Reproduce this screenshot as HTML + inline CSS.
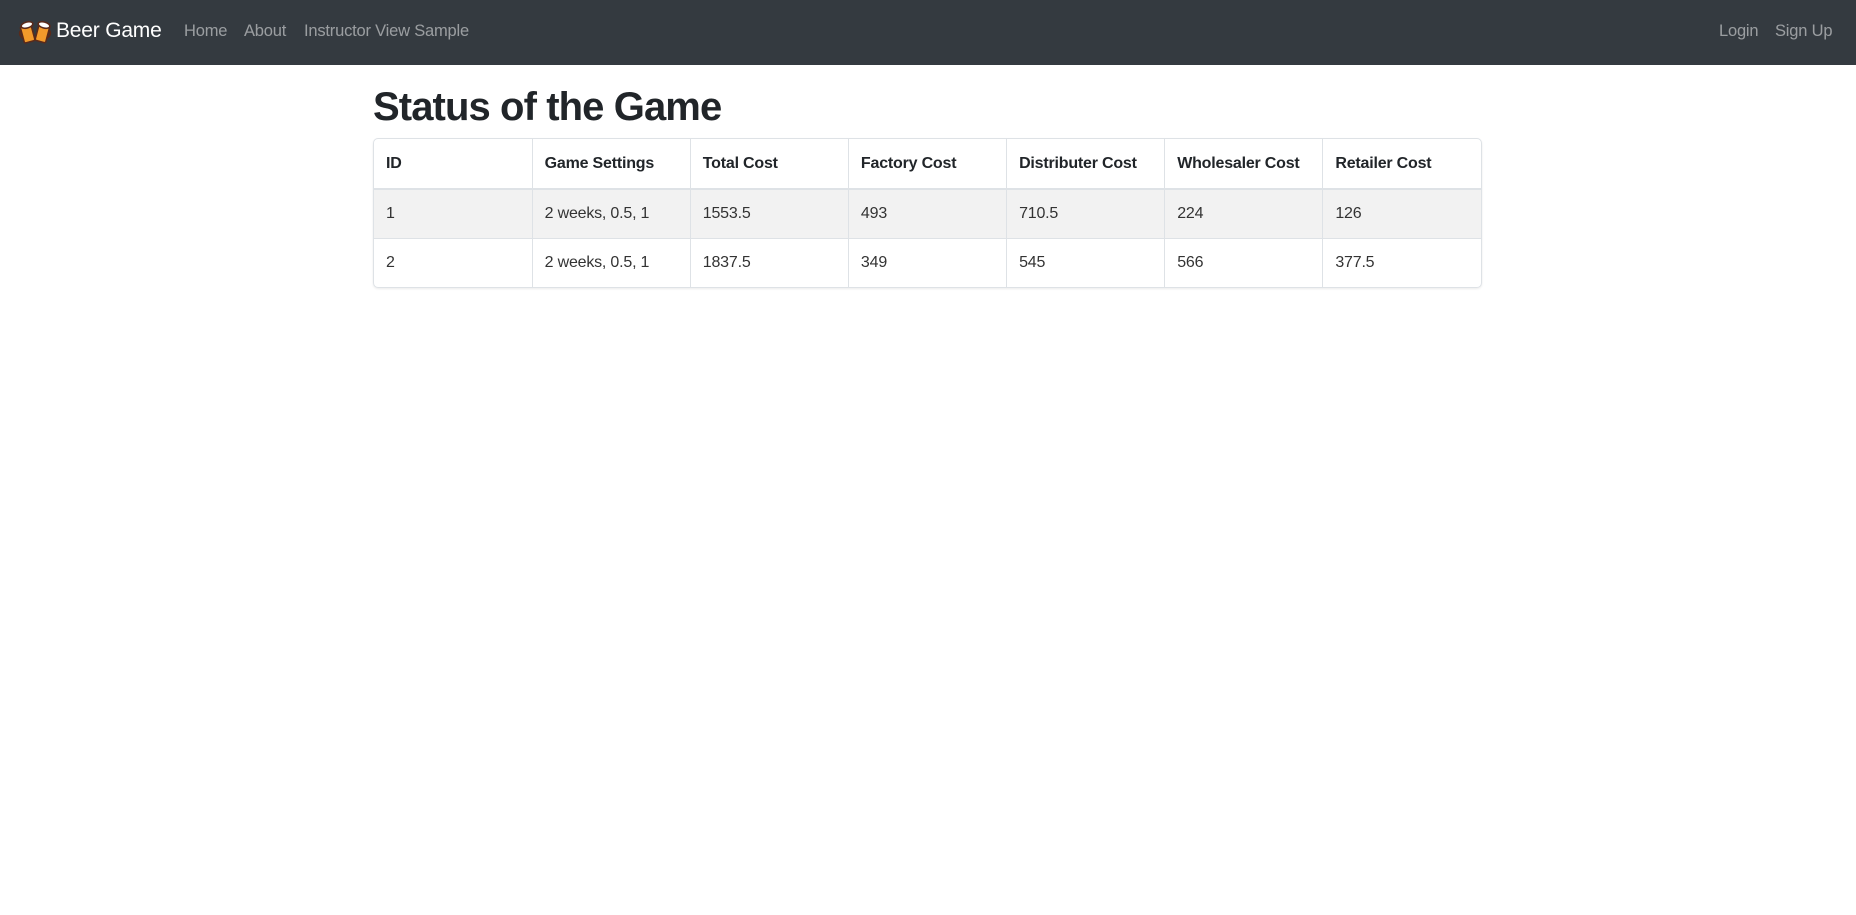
<!DOCTYPE html>
<html><head><meta charset="utf-8"><style>
*{box-sizing:border-box;margin:0;padding:0}
body{width:1856px;height:915px;background:#fff;font-family:"Liberation Sans",sans-serif;color:#212529;overflow:hidden;letter-spacing:-0.2px}
nav{height:65px;background:#343a40;position:relative}
.brand{position:absolute;left:18px;top:16px;display:flex;align-items:center;color:#fff;font-size:21px}
.brand svg{margin-right:2px}
.links a{position:absolute;top:22px;color:rgba(255,255,255,.5);font-size:16.5px;text-decoration:none}
h1{position:absolute;left:373px;top:85px;font-size:40px;font-weight:bold;letter-spacing:-0.9px}
.tbl{position:absolute;left:373px;top:138px;width:1109px;border:1px solid #dee2e6;border-radius:5px;overflow:hidden;box-shadow:0 1px 2px rgba(0,0,0,.08)}
table{border-collapse:collapse;width:100%;table-layout:fixed;font-size:16px}
td,th{padding:0 12px;text-align:left;border-left:1px solid #dee2e6;height:49px}
td:first-child,th:first-child{border-left:none}
th{font-weight:bold;border-bottom:2px solid #dee2e6;height:50px}
tr.s td{background:#f2f2f2;border-bottom:1px solid #dee2e6}
td{color:#333}
</style></head><body>
<nav>
<div class="brand"><svg width="36" height="30" viewBox="0 0 36 30">
<g stroke="#5a2a1a" stroke-width="1.6">
<path d="M2 14 h-0 M3 13 q-3 4 1 8" fill="none" transform="rotate(-15 10 17)"/>
<rect x="4" y="9" width="11" height="17" rx="1.5" fill="#f39a2b" transform="rotate(-15 10 17)"/>
<rect x="19" y="9" width="11" height="17" rx="1.5" fill="#f39a2b" transform="rotate(15 25 17)"/>
<path d="M31 13 q3 4 -1 8" fill="none" transform="rotate(15 25 17)"/>
<ellipse cx="9" cy="9" rx="6" ry="3" fill="#fff" transform="rotate(-15 9 9)"/>
<ellipse cx="26" cy="9" rx="6" ry="3" fill="#fff" transform="rotate(15 26 9)"/>
</g></svg>Beer Game</div>
<div class="links">
<a style="left:184px">Home</a><a style="left:244px">About</a><a style="left:304px">Instructor View Sample</a>
<a style="left:1719px">Login</a><a style="left:1775px">Sign Up</a>
</div>
</nav>
<h1>Status of the Game</h1>
<div class="tbl"><table>
<tr><th>ID</th><th>Game Settings</th><th>Total Cost</th><th>Factory Cost</th><th>Distributer Cost</th><th>Wholesaler Cost</th><th>Retailer Cost</th></tr>
<tr class="s"><td>1</td><td>2 weeks, 0.5, 1</td><td>1553.5</td><td>493</td><td>710.5</td><td>224</td><td>126</td></tr>
<tr><td>2</td><td>2 weeks, 0.5, 1</td><td>1837.5</td><td>349</td><td>545</td><td>566</td><td>377.5</td></tr>
</table></div>
</body></html>
